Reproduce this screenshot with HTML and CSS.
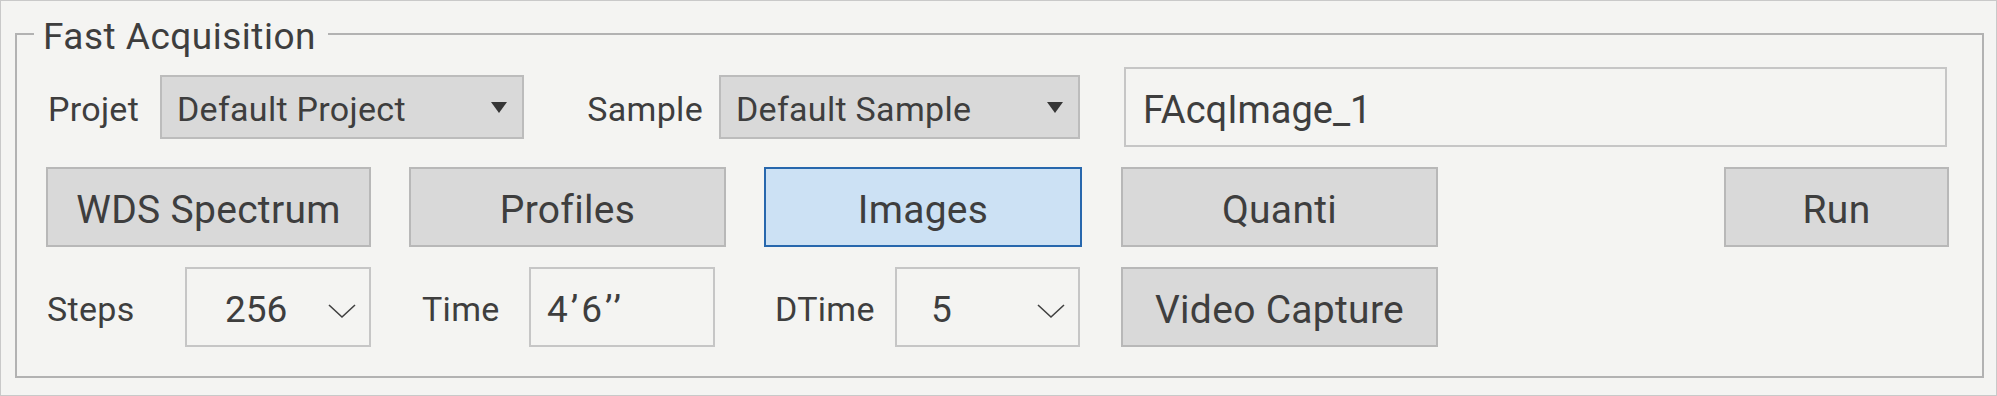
FILE: index.html
```html
<!DOCTYPE html>
<html>
<head>
    <title>Fast Acquisition</title>
    <meta name="viewport" content="width=device-width, initial-scale=1.0">
    <link rel="stylesheet" href="styles.css">
</head>
<body>
    <div class="window">
        <fieldset class="group">
            <legend>Fast Acquisition</legend>

            <div class="row row-top">
                <label class="lbl lbl-projet">Projet</label>
                <div class="select select-project">
                    <span>Default Project</span>
                    <span class="caret"></span>
                </div>
                <label class="lbl lbl-sample">Sample</label>
                <div class="select select-sample">
                    <span>Default Sample</span>
                    <span class="caret"></span>
                </div>
                <div class="text-box name-box">FAcqImage_1</div>
            </div>

            <div class="row row-modes">
                <button class="btn btn-wds">WDS Spectrum</button>
                <button class="btn btn-profiles">Profiles</button>
                <button class="btn btn-images active">Images</button>
                <button class="btn btn-quanti">Quanti</button>
                <button class="btn btn-run">Run</button>
            </div>

            <div class="row row-params">
                <label class="lbl lbl-steps">Steps</label>
                <div class="combo combo-steps">
                    <span>256</span>
                    <svg class="chevron" width="28" height="16" viewBox="0 0 28 16"><polyline points="1,2 14,14 27,2" fill="none" stroke="#404040" stroke-width="1.6"/></svg>
                </div>
                <label class="lbl lbl-time">Time</label>
                <div class="text-box time-box">4’6’’</div>
                <label class="lbl lbl-dtime">DTime</label>
                <div class="combo combo-dtime">
                    <span>5</span>
                    <svg class="chevron" width="28" height="16" viewBox="0 0 28 16"><polyline points="1,2 14,14 27,2" fill="none" stroke="#404040" stroke-width="1.6"/></svg>
                </div>
                <button class="btn btn-video">Video Capture</button>
            </div>
        </fieldset>
    </div>
</body>
</html>
```

FILE: styles.css
```css
body {
    margin: 0;
    background-color: #f4f4f2;
    font-family: Roboto, "Liberation Sans", sans-serif;
    color: #3e3e3e;
}

.window {
    width: 1997px;
    height: 396px;
    box-sizing: border-box;
    border: 1px solid #c9c9c9;
    padding: 15px 12px 0 14px;
}

.group {
    margin: 0;
    padding: 15px 33px 29px 29px;
    border: 2px solid #b2b2b2;
}

.group legend {
    margin-left: -12px;
    padding: 6px 12px 0 9px;
    font-size: 37px;
    line-height: 30px;
    letter-spacing: 0.5px;
}

.row {
    display: flex;
    align-items: center;
    height: 80px;
}

.row + .row {
    margin-top: 20px;
}

.lbl {
    font-size: 34px;
    box-sizing: border-box;
    padding-top: 4px;
    letter-spacing: 0.3px;
}

/* top row: project / sample / file name */
.lbl-projet {
    width: 114px;
    padding-left: 2px;
}

.lbl-sample {
    width: 195px;
    padding-right: 16px;
    text-align: right;
}

.select {
    display: flex;
    align-items: center;
    justify-content: space-between;
    height: 64px;
    box-sizing: border-box;
    padding: 4px 15px 0;
    background-color: #d9d9d9;
    border: 2px solid #bcbcbc;
    font-size: 34px;
    letter-spacing: 0.3px;
}

.select-project {
    width: 364px;
}

.select-sample {
    width: 361px;
}

.caret {
    width: 0;
    height: 0;
    margin-top: -4px;
    border-left: 8px solid transparent;
    border-right: 8px solid transparent;
    border-top: 11px solid #363636;
}

.text-box {
    display: flex;
    align-items: center;
    height: 80px;
    box-sizing: border-box;
    padding-top: 5px;
    border: 2px solid #c6c6c6;
    background-color: #f4f4f2;
    font-size: 38px;
}

.name-box {
    width: 823px;
    margin-left: 44px;
    padding-left: 17px;
}

/* buttons */
.btn {
    height: 80px;
    box-sizing: border-box;
    padding: 6px 0 0;
    background-color: #d9d9d9;
    border: 2px solid #b8b8b8;
    border-radius: 0;
    font-family: inherit;
    font-size: 39px;
    letter-spacing: 0.3px;
    color: #3e3e3e;
}

.btn.active {
    background-color: #cce1f4;
    border-color: #2767ad;
}

.btn-wds {
    width: 325px;
}

.btn-profiles {
    width: 317px;
    margin-left: 38px;
}

.btn-images {
    width: 318px;
    margin-left: 38px;
}

.btn-quanti {
    width: 317px;
    margin-left: 39px;
}

.btn-run {
    width: 225px;
    margin-left: auto;
}

/* bottom row: steps / time / dtime */
.lbl-steps {
    width: 139px;
    padding-left: 1px;
}

.lbl-time {
    width: 120px;
    margin-left: 38px;
    padding-left: 13px;
}

.lbl-dtime {
    width: 131px;
    margin-left: 49px;
    padding-left: 11px;
}

.combo {
    display: flex;
    align-items: center;
    justify-content: space-between;
    height: 80px;
    box-sizing: border-box;
    border: 2px solid #c6c6c6;
    font-size: 37px;
}

.combo-steps {
    width: 186px;
    padding: 5px 13px 0 38px;
}

.combo-dtime {
    width: 185px;
    padding: 5px 13px 0 34px;
}

.chevron {
    margin-top: 2px;
}

.time-box {
    width: 186px;
    padding-left: 16px;
    font-size: 37px;
    letter-spacing: 3px;
}

.btn-video {
    width: 317px;
    margin-left: 41px;
}
```
